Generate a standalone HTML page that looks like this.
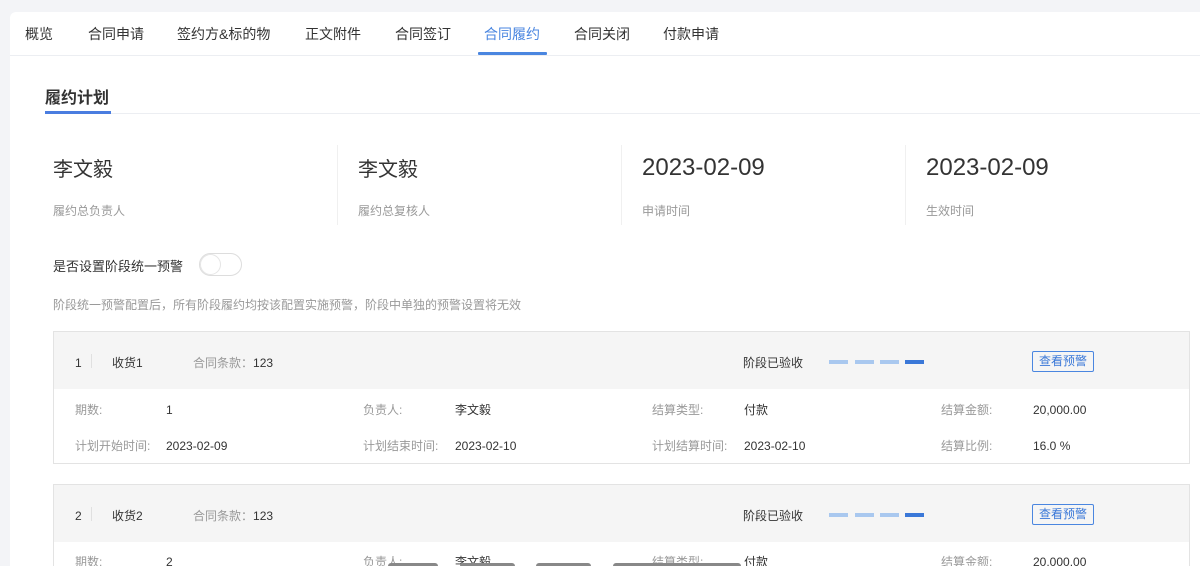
<!DOCTYPE html>
<html style="height:566px;overflow:hidden"><head><meta charset="utf-8"><style>
*{margin:0;padding:0;box-sizing:border-box}
body{width:1200px;height:566px;overflow:hidden;background:#f3f4f7;font-family:"Liberation Sans","Noto Sans CJK SC",sans-serif;position:relative;color:#333}
.a{position:absolute;white-space:nowrap}
.card{position:absolute;left:10px;top:12px;width:1190px;height:554px;background:#fff;border-radius:6px 0 0 0}
.tab{font-size:14px;color:#333;top:24px}
.lbl{font-size:12px;color:#999}
.v{font-size:12px;color:#333}
.n{margin-top:2px}
.big{font-size:20px;color:#333}
.date{font-size:24px;color:#333}
.box{position:absolute;left:53px;width:1137px;border:1px solid #e3e3e3;background:#fff}
.hd{height:57px;background:#f5f5f5}
.bar{position:absolute;width:19px;height:4px;background:#a9c8ef}
.btn{position:absolute;width:62px;height:21px;border:1px solid #4a86e0;color:#3a78d8;font-size:12px;text-align:center;line-height:19px;border-radius:2px}
</style></head><body>
<div class="card"></div>
<div class="a tab" style="left:25px">概览</div>
<div class="a tab" style="left:88px">合同申请</div>
<div class="a tab" style="left:177px">签约方&amp;标的物</div>
<div class="a tab" style="left:305px">正文附件</div>
<div class="a tab" style="left:395px">合同签订</div>
<div class="a tab" style="left:484px;color:#4a86e0">合同履约</div>
<div class="a tab" style="left:574px">合同关闭</div>
<div class="a tab" style="left:663px">付款申请</div>
<div class="a" style="left:10px;top:55px;width:1190px;height:1px;background:#eceef2"></div>
<div class="a" style="left:478px;top:52px;width:69px;height:3px;background:#4a86e0;border-radius:1px"></div>
<div class="a" style="left:45px;top:84px;font-size:16px;font-weight:bold;color:#333">履约计划</div>
<div class="a" style="left:45px;top:113px;width:1155px;height:1px;background:#eceef2"></div>
<div class="a" style="left:45px;top:111px;width:66px;height:3px;background:#4a7de0"></div>

<div class="a big" style="left:53px;top:153px">李文毅</div>
<div class="a lbl" style="left:53px;top:202px">履约总负责人</div>
<div class="a" style="left:337px;top:145px;width:1px;height:80px;background:#f0f0f0"></div>
<div class="a big" style="left:358px;top:153px">李文毅</div>
<div class="a lbl" style="left:358px;top:202px">履约总复核人</div>
<div class="a" style="left:621px;top:145px;width:1px;height:80px;background:#f0f0f0"></div>
<div class="a date" style="left:642px;top:154px">2023-02-09</div>
<div class="a lbl" style="left:642px;top:202px">申请时间</div>
<div class="a" style="left:905px;top:145px;width:1px;height:80px;background:#f0f0f0"></div>
<div class="a date" style="left:926px;top:154px">2023-02-09</div>
<div class="a lbl" style="left:926px;top:202px">生效时间</div>

<div class="a" style="left:53px;top:256px;font-size:13px;color:#333">是否设置阶段统一预警</div>
<div class="a" style="left:199px;top:253px;width:43px;height:23px;border:1px solid #ddd;border-radius:12px;background:#fff"></div>
<div class="a" style="left:200px;top:254px;width:21px;height:21px;border:1px solid #e5e5e5;border-radius:50%;background:#fff"></div>
<div class="a lbl" style="left:53px;top:296px">阶段统一预警配置后，所有阶段履约均按该配置实施预警，阶段中单独的预警设置将无效</div>

<div class="box" style="top:331px;height:133px"><div class="hd"></div></div>
<div class="box" style="top:484px;height:100px"><div class="hd"></div></div>

<div class="a v n" style="left:75px;top:354px">1</div>
<div class="a" style="left:91px;top:354px;width:1px;height:14px;background:#e0e0e0"></div>
<div class="a v" style="left:112px;top:354px">收货1</div>
<div class="a lbl" style="left:193px;top:354px">合同条款：<span style="color:#333">123</span></div>
<div class="a v" style="left:743px;top:354px">阶段已验收</div>
<div class="bar" style="left:829px;top:360px"></div><div class="bar" style="left:855px;top:360px"></div><div class="bar" style="left:880px;top:360px"></div><div class="bar" style="left:905px;top:360px;background:#3a78d8"></div>
<div class="btn" style="left:1032px;top:351px">查看预警</div>
<div class="a lbl" style="left:75px;top:401px">期数:</div><div class="a v n" style="left:166px;top:401px">1</div>
<div class="a lbl" style="left:363px;top:401px">负责人:</div><div class="a v" style="left:455px;top:401px">李文毅</div>
<div class="a lbl" style="left:652px;top:401px">结算类型:</div><div class="a v" style="left:744px;top:401px">付款</div>
<div class="a lbl" style="left:941px;top:401px">结算金额:</div><div class="a v n" style="left:1033px;top:401px">20,000.00</div>
<div class="a lbl" style="left:75px;top:437px">计划开始时间:</div><div class="a v n" style="left:166px;top:437px">2023-02-09</div>
<div class="a lbl" style="left:363px;top:437px">计划结束时间:</div><div class="a v n" style="left:455px;top:437px">2023-02-10</div>
<div class="a lbl" style="left:652px;top:437px">计划结算时间:</div><div class="a v n" style="left:744px;top:437px">2023-02-10</div>
<div class="a lbl" style="left:941px;top:437px">结算比例:</div><div class="a v n" style="left:1033px;top:437px">16.0 %</div>

<div class="a v n" style="left:75px;top:507px">2</div>
<div class="a" style="left:91px;top:507px;width:1px;height:14px;background:#e0e0e0"></div>
<div class="a v" style="left:112px;top:507px">收货2</div>
<div class="a lbl" style="left:193px;top:507px">合同条款：<span style="color:#333">123</span></div>
<div class="a v" style="left:743px;top:507px">阶段已验收</div>
<div class="bar" style="left:829px;top:513px"></div><div class="bar" style="left:855px;top:513px"></div><div class="bar" style="left:880px;top:513px"></div><div class="bar" style="left:905px;top:513px;background:#3a78d8"></div>
<div class="btn" style="left:1032px;top:504px">查看预警</div>
<div class="a lbl" style="left:75px;top:553px">期数:</div><div class="a v n" style="left:166px;top:553px">2</div>
<div class="a lbl" style="left:363px;top:553px">负责人:</div><div class="a v" style="left:455px;top:553px">李文毅</div>
<div class="a lbl" style="left:652px;top:553px">结算类型:</div><div class="a v" style="left:744px;top:553px">付款</div>
<div class="a lbl" style="left:941px;top:553px">结算金额:</div><div class="a v n" style="left:1033px;top:553px">20,000.00</div>
<div class="a" style="left:388px;top:563px;width:50px;height:6px;background:#888;border-radius:3px"></div>
<div class="a" style="left:460px;top:563px;width:55px;height:6px;background:#888;border-radius:3px"></div>
<div class="a" style="left:536px;top:563px;width:55px;height:6px;background:#888;border-radius:3px"></div>
<div class="a" style="left:613px;top:563px;width:128px;height:6px;background:#888;border-radius:3px"></div>
</body></html>
